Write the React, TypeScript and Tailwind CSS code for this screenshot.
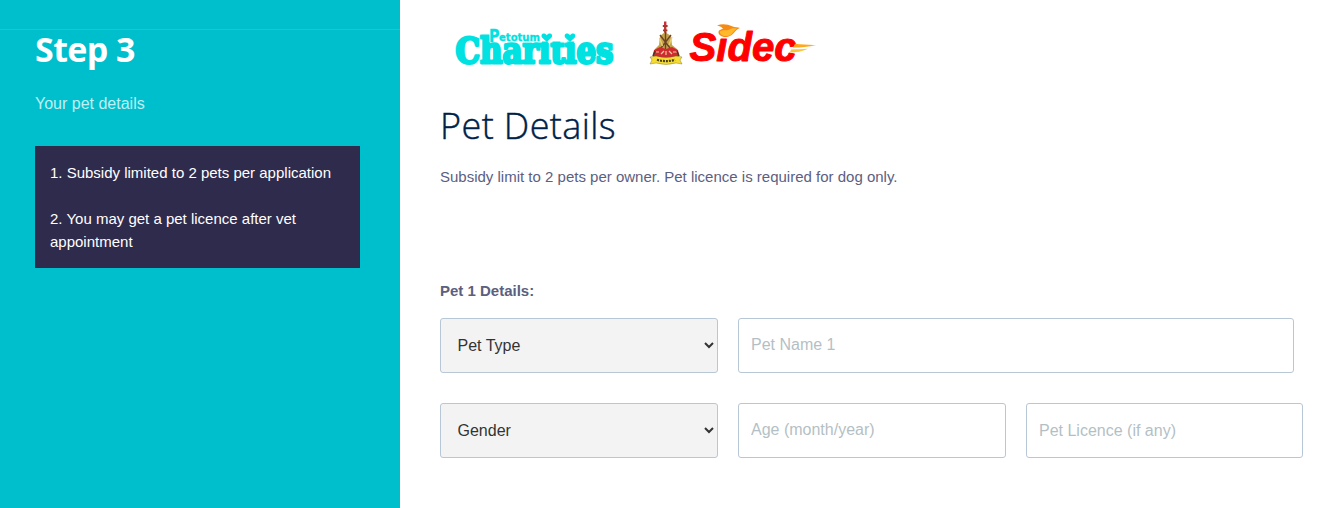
import React from 'react';

const inputClass =
  'h-[55px] rounded-[3px] border border-[#b7c7d6] bg-white px-3 text-base text-[#333] placeholder:text-[#b4bfc5] outline-none';

const selectClass =
  'h-[55px] w-[278px] rounded-[3px] border border-[#b7c7d6] bg-[#f3f3f3] pl-[12.5px] pr-px text-base text-[#333] outline-none';

const CharitiesLogo: React.FC = () => (
  <svg className="overflow-visible" width="164" height="44" viewBox="0 0 164 44" fill="#00e1e1" role="img" aria-label="Petotum Charities">
    <text
      x="1.5"
      y="37.8"
      fontFamily="'DejaVu Serif', serif"
      fontWeight="700"
      fontSize="35"
      textLength="158"
      lengthAdjust="spacingAndGlyphs"
      stroke="#00e1e1"
      strokeWidth="2.8"
      strokeLinejoin="round"
    >
      Charities
    </text>
    <path d="M86 2h37v14.5H86zM35.5 1H88v16.2H35.5z" fill="#fff" />
    <text fontFamily="'DejaVu Sans', sans-serif" fontWeight="700" stroke="#00e1e1" strokeWidth="0.3" strokeLinejoin="round">
      <tspan x="35" y="16.5" fontSize="17.5" textLength="10.5" lengthAdjust="spacingAndGlyphs">P</tspan>
      <tspan x="45" y="16" fontSize="11" textLength="41" lengthAdjust="spacingAndGlyphs">etotum</tspan>
    </text>
    <path d="M92.8 17 L88 12.5 C86 8.5 90.8 7 92.8 10.2 C94.8 7 99.6 8.5 97.6 12.5Z" />
    <path d="M116 17 L111.2 12.5 C109.2 8.5 114 7 116 10.2 C118 7 122.8 8.5 120.8 12.5Z" />
  </svg>
);

const Crest: React.FC = () => (
  <svg width="34" height="46" viewBox="0 0 34 46">
    <path d="M15 0.500h2.4v13H15z" fill="#c8323a" />
    <path d="M13.800 4h4.800v2h-4.800zM14 8.500h4.400v1.800H14z" fill="#a33a2a" />
    <path d="M16 11l6 4 1 9 5 4 2 8H4l2-8 4-4 1-9z" fill="#c4a24a" />
    <path d="M11 14l10 13M22 14l-10 13M16.500 11v17" stroke="#6b4426" strokeWidth="1.4" />
    <path d="M10.500 17l3 8M23 16l-3 8" stroke="#e8d070" strokeWidth="1.4" />
    <path d="M5 29l6-3 6 2 6-2 6 3 1 6-13 3-13-3z" fill="#cf2a30" />
    <path d="M7 31h3M12 33l3-3M17 34v-4M20 30l3 3M24 31h4" stroke="#f0c9a0" strokeWidth="1.2" />
    <path d="M4 35l2-5M30 35l-2-5" stroke="#513420" strokeWidth="1.6" />
    <path d="M1 36l6-1q10 3 20 0l6 1-2 3 2 4-6-1q-10 3-20 0l-6 1 2-4z" fill="#f5dc32" stroke="#746126" strokeWidth=".4" />
    <path d="M8 38.800q9 2.600 18 0" fill="none" stroke="#4a3d18" strokeWidth="2.2" strokeDasharray="2 1" />
  </svg>
);

const SidecLogo: React.FC = () => (
  <svg className="overflow-visible" width="130" height="44" viewBox="0 0 130 44" role="img" aria-label="Sidec">
    <text
      x="0.5"
      y="39.8"
      fontFamily="'Liberation Sans', Arial, sans-serif"
      fontWeight="700"
      fontStyle="italic"
      fontSize="40"
      textLength="107"
      lengthAdjust="spacingAndGlyphs"
      fill="#ff0000"
      stroke="#ff0000"
      strokeWidth="1"
      strokeLinejoin="round"
    >
      Sidec
    </text>
    <path d="M27 8h12v8H27z" fill="#fff" />
    <path d="M28 4.500C33 2.500 39 3.300 43 5.300C46 7 48.500 6 51 7C46 8 45 15 38 16C32 16.500 28 13 30 9.500L34 7.500C32 5.500 30.500 5 28 4.500Z" fill="#f78a14" />
    <path d="M31 10.500C35 8 37 10.500 41 8.300C44 6.500 46 7.800 48 7.500C44.500 9.500 43 15 38 15C34 15.500 30.500 13.500 31 10.500Z" fill="#ffb92a" />
    <path d="M106 22.800C113 23.300 120 24.300 127 24C119 26.300 112 26.500 104 26.600Z" fill="#ffa81c" />
    <path d="M102 28.500C108 28.300 113 28.300 119 27.800C113 30.800 107 31.400 101 31.500Z" fill="#ffc53a" />
  </svg>
);

const App: React.FC = () => {
  return (
    <div className="flex h-screen w-full overflow-hidden bg-white font-['Liberation_Sans',Arial,sans-serif]">
      <aside className="w-[400px] shrink-0 bg-[#00bfcd]">
        <div className="h-[30px] border-b border-[#19c6d2]" />
        <div className="pl-[35px] pr-10">
          <h2 className="h-10 font-['Open_Sans',sans-serif] text-[34px] font-bold leading-[38px] tracking-[-0.6px] text-white">
            Step 3
          </h2>
          <p className="mt-[22px] text-base leading-6 text-white/75">Your pet details</p>
          <div className="mt-[30px] bg-[#2f2b4d] px-[15px] py-[15px] text-[15px] leading-[23px] text-white">
            <p>1. Subsidy limited to 2 pets per application</p>
            <p className="mt-[23px]">2. You may get a pet licence after vet appointment</p>
          </div>
        </div>
      </aside>

      <main className="flex-1 pl-10">
        <header className="flex h-[80px] items-start pl-[14px] pt-[21px]">
          <div className="pt-1"><CharitiesLogo /></div>
          <div className="ml-[31px]"><Crest /></div>
          <div className="ml-[6px]"><SidecLogo /></div>
        </header>

        <h1 className="mt-[21px] h-[50px] font-['Open_Sans',sans-serif] text-[36px] font-light leading-[50px] tracking-[0.4px] text-[#002147] [-webkit-text-stroke:0.4px_#002147]">
          Pet Details
        </h1>
        <p className="mt-[14px] text-[15px] leading-[23px] text-[#5c6080]">
          Subsidy limit to 2 pets per owner. Pet licence is required for dog only.
        </p>

        <form>
          <p className="mt-[91px] text-[15px] font-bold leading-[23px] text-[#5c6080]">Pet 1 Details:</p>
          <div className="mt-4 flex gap-5">
            <select className={selectClass} aria-label="Pet Type">
              <option>Pet Type</option>
            </select>
            <input className={`${inputClass} w-[556px] pb-px`} placeholder="Pet Name 1" />
          </div>
          <div className="mt-[30px] flex gap-5">
            <select className={selectClass} aria-label="Gender">
              <option>Gender</option>
            </select>
            <input className={`${inputClass} w-[268px] pb-px`} placeholder="Age (month/year)" />
            <input className={`${inputClass} w-[277px]`} placeholder="Pet Licence (if any)" />
          </div>
        </form>
      </main>
    </div>
  );
};

export default App;
